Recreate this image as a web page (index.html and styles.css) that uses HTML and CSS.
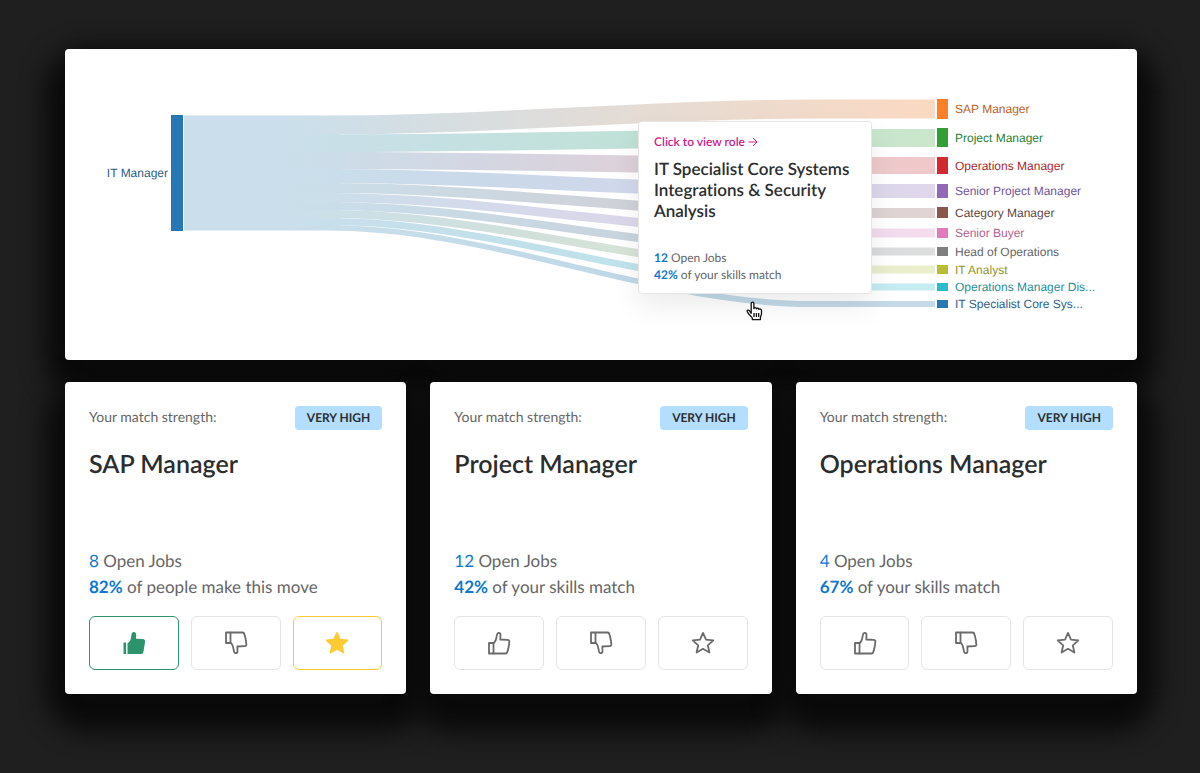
FILE: index.html
```html
<!DOCTYPE html>
<html lang="en">
<head>
  <meta charset="UTF-8">
  <title>Career paths</title>
  <meta name="viewport" content="width=device-width, initial-scale=1.0">
  <link rel="stylesheet" href="styles.css">
</head>
<body>

  <!-- Shared icons -->
  <svg class="sprite" aria-hidden="true">
    <symbol id="thumb" viewBox="0 0 24 24">
      <path d="M2 12h4.500v10.500H2z"/>
      <path d="M6.500 12.200c1.900-1.200 2.500-3.300 3-6.200.3-2.100.5-4 1.900-4.200 1.500-.2 2.200 1 2.100 2.500l-.2 4.200 7.200.3c1.600.1 2.100 1.100 1.800 2.500l-.3 1.300.2 1.200-.6 1.300.1 1.300-.6 1.200v1.300l-.6 1.100c-.1 1.600-.7 2.500-2.100 2.500H6.500"/>
    </symbol>
    <symbol id="thumb-full" viewBox="0 0 24 24">
      <path d="M1.500 11.500h2.600v11.500H1.500z"/>
      <path d="M5.500 12.200c2.600-1.200 3.300-3.300 3.700-6.700.3-3 .8-4.500 2.500-4.500 1.900 0 2.600 1.500 2.500 3.300l-.2 3.500 6.500.3c2.100.1 2.900 1.300 2.500 3.200l-1.500 9.200c-.3 1.700-1.200 2.500-2.700 2.500H5.500z"/>
    </symbol>
    <symbol id="star" viewBox="0 0 24 24">
      <path d="M12 1.900l3 6.700 7.300.8-5.500 4.900 1.600 7.200-6.400-3.700-6.400 3.700 1.600-7.200-5.500-4.900 7.300-.8z"/>
    </symbol>
  </svg>

  <main class="page">
    <section class="panel chart">
      <svg class="sankey" viewBox="0 0 1072 311" role="img" aria-label="Moves from IT Manager">
        <defs>
          <linearGradient id="g1" gradientUnits="userSpaceOnUse" x1="220" x2="870"><stop stop-color="#cadfeb"/><stop offset="1" stop-color="#fbd9c2"/></linearGradient>
          <linearGradient id="g2" gradientUnits="userSpaceOnUse" x1="220" x2="870"><stop stop-color="#cadfeb"/><stop offset=".5" stop-color="#c0e1d8"/><stop offset="1" stop-color="#cae7cb"/></linearGradient>
          <linearGradient id="g3" gradientUnits="userSpaceOnUse" x1="220" x2="870"><stop stop-color="#cadfeb"/><stop offset=".3" stop-color="#d3d6e2"/><stop offset="1" stop-color="#f1c8c9"/></linearGradient>
          <linearGradient id="g4" gradientUnits="userSpaceOnUse" x1="220" x2="870"><stop stop-color="#cadfeb"/><stop offset=".35" stop-color="#cad8ea"/><stop offset="1" stop-color="#e0d7eb"/></linearGradient>
          <linearGradient id="g5" gradientUnits="userSpaceOnUse" x1="220" x2="870"><stop stop-color="#cadfeb"/><stop offset=".6" stop-color="#cfd0d5"/><stop offset="1" stop-color="#e1d4d3"/></linearGradient>
          <linearGradient id="g6" gradientUnits="userSpaceOnUse" x1="220" x2="870"><stop stop-color="#cadfeb"/><stop offset=".5" stop-color="#dad7ea"/><stop offset="1" stop-color="#f6dced"/></linearGradient>
          <linearGradient id="g7" gradientUnits="userSpaceOnUse" x1="220" x2="870"><stop stop-color="#cadfeb"/><stop offset=".6" stop-color="#c8d2dc"/><stop offset="1" stop-color="#dedede"/></linearGradient>
          <linearGradient id="g8" gradientUnits="userSpaceOnUse" x1="220" x2="870"><stop stop-color="#cadfeb"/><stop offset=".4" stop-color="#d1e0d9"/><stop offset="1" stop-color="#ecefcb"/></linearGradient>
          <linearGradient id="g9" gradientUnits="userSpaceOnUse" x1="220" x2="870"><stop stop-color="#cadfeb"/><stop offset=".4" stop-color="#bfe0ea"/><stop offset="1" stop-color="#c4edf2"/></linearGradient>
          <linearGradient id="g10" gradientUnits="userSpaceOnUse" x1="220" x2="870"><stop stop-color="#cadfeb"/><stop offset=".5" stop-color="#bfd8e7"/><stop offset="1" stop-color="#c4dae8"/></linearGradient>
        </defs>

        <g class="links">
          <path fill="#cadfeb" d="M119 67H275V181H119z"/>
          <path fill="url(#g1)" d="M119 66.500H263C425 66.500 586 50.500 748 50.500H870V69.500H748C586 69.500 425 85.500 263 85.500H119z"/>
          <path fill="url(#g2)" d="M119 85.500H263C425 85.500 586 80 748 80H870V98H748C586 98 425 103 263 103H119z"/>
          <path fill="url(#g3)" d="M119 103H263C425 103 586 108 748 108H870V125H748C586 125 425 120 263 120H119z"/>
          <path fill="url(#g4)" d="M119 120H263C425 120 586 135 748 135H870V149H748C586 149 425 134 263 134H119z"/>
          <path fill="url(#g5)" d="M119 134H263C425 134 586 159 748 159H870V169H748C586 169 425 144 263 144H119z"/>
          <path fill="url(#g6)" d="M119 144H263C425 144 586 179.500 748 179.500H870V188.500H748C586 188.500 425 153 263 153H119z"/>
          <path fill="url(#g7)" d="M119 153H263C425 153 586 198.500 748 198.500H870V206.500H748C586 206.500 425 161 263 161H119z"/>
          <path fill="url(#g8)" d="M119 161H263C425 161 586 216.500 748 216.500H870V224.500H748C586 224.500 425 169 263 169H119z"/>
          <path fill="url(#g9)" d="M119 169H263C425 169 586 234.500 748 234.500H870V241.500H748C586 241.500 425 176 263 176H119z"/>
          <path fill="url(#g10)" d="M119 176H263C425 176 586 252 748 252H870V258H748C586 258 425 181.500 263 181.500H119z"/>
        </g>

        <rect fill="#2777b4" x="106" y="66" width="12" height="116"/>
        <rect fill="#fd7f28" x="872" y="50" width="11" height="20"/>
        <rect fill="#339f34" x="872" y="79" width="11" height="19"/>
        <rect fill="#d32a2f" x="872" y="108" width="11" height="17"/>
        <rect fill="#9268b8" x="872" y="135" width="11" height="14"/>
        <rect fill="#8a564c" x="872" y="158" width="11" height="11"/>
        <rect fill="#e27bbe" x="872" y="179" width="11" height="10"/>
        <rect fill="#7f7f7f" x="872" y="198" width="11" height="9"/>
        <rect fill="#b9bd31" x="872" y="216" width="11" height="9"/>
        <rect fill="#2dbbcb" x="872" y="234" width="11" height="8"/>
        <rect fill="#2777b4" x="872" y="251" width="11" height="8"/>

        <g class="labels">
          <text x="103" y="128" fill="#2f5f86" text-anchor="end">IT Manager</text>
          <text x="890" y="64" fill="#bb6227">SAP Manager</text>
          <text x="890" y="93" fill="#2c7f33">Project Manager</text>
          <text x="890" y="121" fill="#a92a30">Operations Manager</text>
          <text x="890" y="146" fill="#73559a">Senior Project Manager</text>
          <text x="890" y="168" fill="#624846">Category Manager</text>
          <text x="890" y="188" fill="#b0638f">Senior Buyer</text>
          <text x="890" y="207" fill="#666">Head of Operations</text>
          <text x="890" y="225" fill="#8f942b">IT Analyst</text>
          <text x="890" y="242" fill="#2a8f99">Operations Manager Dis...</text>
          <text x="890" y="259" fill="#2b628c">IT Specialist Core Sys...</text>
        </g>
      </svg>

      <div class="tooltip">
        <a class="tooltip-link" href="#role">Click to view role
          <svg class="arrow" viewBox="0 0 10 10" aria-hidden="true"><path d="M.5 5h8.500M5 1l4 4-4 4"/></svg>
        </a>
        <h3 class="tooltip-title">IT Specialist Core Systems Integrations &amp; Security Analysis</h3>
        <p class="tooltip-stat"><b>12</b> Open Jobs</p>
        <p class="tooltip-stat"><b>42%</b> of your skills match</p>
      </div>

      <svg class="cursor" viewBox="0 0 17 20" aria-hidden="true">
        <path d="M5.200 12.300V2.700c0-2 2.700-2 2.700 0v4.800c.3-1.300 2.400-1.100 2.500.3.500-1 2.300-.8 2.500.6.700-.9 2.600-.5 2.600 1.100v3c0 1.800-1 2.400-1.100 4.100v2H6.300v-1.700L3 13.300 1.400 10.900c-.8-1.300.8-2.400 1.900-1.400z"/>
        <path d="M8 12v4M10.400 12v4M12.700 12v4"/>
      </svg>
    </section>

    <section class="cards">
      <article class="panel card">
        <header class="card-head">
          <span>Your match strength:</span>
          <strong class="badge">VERY HIGH</strong>
        </header>
        <h2 class="card-title">SAP Manager</h2>
        <p class="stat"><span class="num">8</span> Open Jobs</p>
        <p class="stat"><b class="num">82%</b> of people make this move</p>
        <div class="actions">
          <button class="action liked" aria-label="Like"><svg><use href="#thumb-full"/></svg></button>
          <button class="action" aria-label="Dislike"><svg class="down"><use href="#thumb"/></svg></button>
          <button class="action starred" aria-label="Favourite"><svg><use href="#star"/></svg></button>
        </div>
      </article>

      <article class="panel card">
        <header class="card-head">
          <span>Your match strength:</span>
          <strong class="badge">VERY HIGH</strong>
        </header>
        <h2 class="card-title">Project Manager</h2>
        <p class="stat"><span class="num">12</span> Open Jobs</p>
        <p class="stat"><b class="num">42%</b> of your skills match</p>
        <div class="actions">
          <button class="action" aria-label="Like"><svg><use href="#thumb"/></svg></button>
          <button class="action" aria-label="Dislike"><svg class="down"><use href="#thumb"/></svg></button>
          <button class="action" aria-label="Favourite"><svg><use href="#star"/></svg></button>
        </div>
      </article>

      <article class="panel card">
        <header class="card-head">
          <span>Your match strength:</span>
          <strong class="badge">VERY HIGH</strong>
        </header>
        <h2 class="card-title">Operations Manager</h2>
        <p class="stat"><span class="num">4</span> Open Jobs</p>
        <p class="stat"><b class="num">67%</b> of your skills match</p>
        <div class="actions">
          <button class="action" aria-label="Like"><svg><use href="#thumb"/></svg></button>
          <button class="action" aria-label="Dislike"><svg class="down"><use href="#thumb"/></svg></button>
          <button class="action" aria-label="Favourite"><svg><use href="#star"/></svg></button>
        </div>
      </article>
    </section>
  </main>

</body>
</html>
```
FILE: styles.css
```css
* {
  box-sizing: border-box;
}
body {
  margin: 0;
  background: #1f1f1f;
  color: #666;
  font-family: Lato, "Open Sans", sans-serif;
  font-variant-ligatures: none;
  text-rendering: geometricPrecision;
}
h2, h3, p {
  margin: 0;
}
.sprite {
  display: none;
}
.page {
  display: flex;
  flex-direction: column;
  gap: 22px;
  padding: 49px 63px 79px 65px;
  isolation: isolate;
}
.panel {
  position: relative;
  background: #fff;
  border-radius: 4px;
}
/* shadow sits behind every panel */
.panel::before {
  content: "";
  position: absolute;
  inset: 0;
  z-index: -1;
  border-radius: 24px;
  background: #0a0a0a;
  box-shadow: 0 18px 24px 20px #0a0a0a;
}

/* chart */
.sankey {
  display: block;
  width: 100%;
  height: auto;
}
.labels {
  font-family: "Liberation Sans", Arial, sans-serif;
  font-size: 12px;
}
.tooltip {
  position: absolute;
  top: 72px;
  left: 573px;
  width: 234px;
  padding: 12px 15px 10px;
  background: #fff;
  border: 1px solid #e6e6e6;
  border-radius: 4px;
  box-shadow: 0 12px 28px rgba(0, 0, 0, .08);
}
.tooltip-link {
  display: block;
  color: #cf1a8b;
  font-size: 12px;
  font-weight: 600;
  line-height: 16px;
  text-decoration: none;
}
.arrow {
  width: 10px;
  height: 10px;
  vertical-align: -1px;
  fill: none;
  stroke: currentColor;
}
.tooltip-title {
  min-height: 91px;
  margin-top: 8px;
  color: #2b2d2e;
  font-size: 17px;
  font-weight: 600;
  line-height: 21px;
}
.tooltip-stat {
  font-size: 12px;
  line-height: 17px;
}
.tooltip-stat b {
  color: #0f78d0;
}
.cursor {
  position: absolute;
  top: 252px;
  left: 681px;
  width: 17px;
  height: 20px;
  fill: #fff;
  stroke: #111;
  stroke-width: 1.3;
  stroke-linejoin: round;
}

/* cards */
.cards {
  display: grid;
  grid-template-columns: repeat(3, 1fr);
  gap: 24px;
}
.card {
  padding: 24px;
}
.card-head {
  display: flex;
  justify-content: space-between;
  align-items: flex-start;
  font-size: 14px;
  line-height: 22px;
}
.badge {
  padding: 0 12px;
  background: #b3deff;
  border-radius: 4px;
  color: #2b2d2e;
  font-size: 12px;
  line-height: 24px;
}
.card-title {
  min-height: 99px;
  margin-top: 19px;
  color: #2b2d2e;
  font-size: 25px;
  font-weight: 600;
  line-height: 30px;
}
.stat {
  font-size: 17px;
  line-height: 26px;
}
.num {
  color: #0f78d0;
}
.actions {
  display: grid;
  grid-template-columns: repeat(3, 1fr);
  gap: 12px;
  margin-top: 16px;
}
.action {
  display: flex;
  justify-content: center;
  align-items: center;
  height: 54px;
  padding: 0;
  background: #fff;
  border: 1px solid #e4e4e4;
  border-radius: 6px;
  color: #6b6b6b;
  cursor: pointer;
}
.action svg {
  width: 24px;
  height: 24px;
  fill: none;
  stroke: currentColor;
  stroke-width: 1.8;
  stroke-linejoin: round;
}
.action .down {
  transform: scaleY(-1);
}
.liked {
  border-color: #2b946c;
  color: #2b946c;
}
.action.liked svg {
  fill: currentColor;
  stroke: none;
}
.starred {
  border-color: #ffcb33;
  color: #ffcb33;
}
.action.starred svg {
  fill: currentColor;
}
```
